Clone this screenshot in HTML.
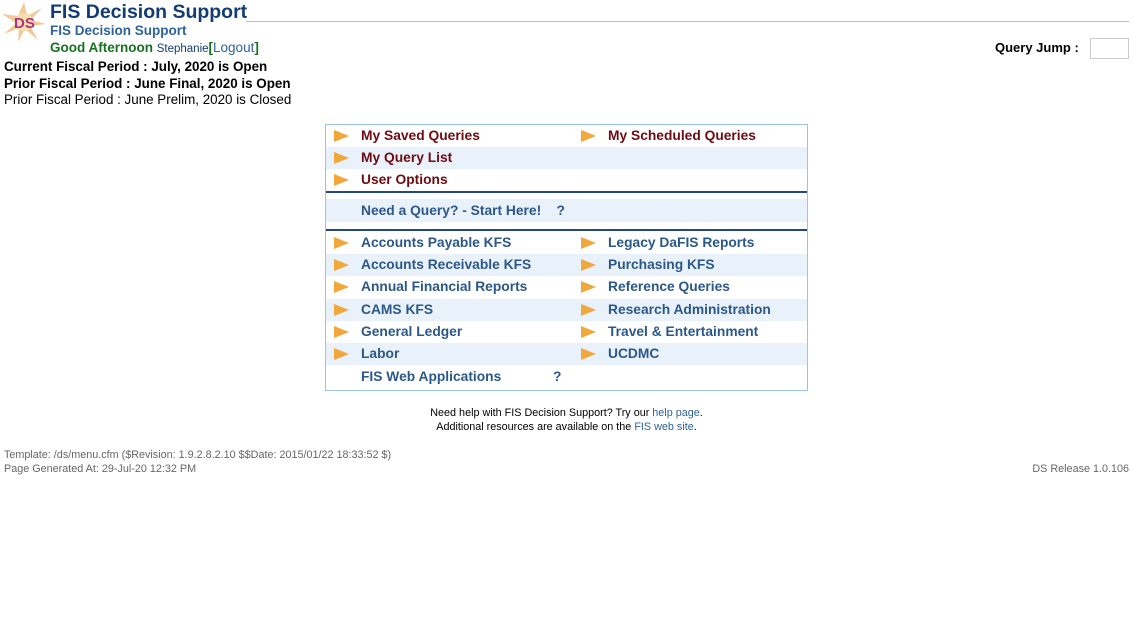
<!DOCTYPE html>
<html><head><meta charset="utf-8"><style>
body{margin:0;width:1133px;height:644px;background:#fff;font-family:"Liberation Sans",Arial,sans-serif;position:relative;overflow:hidden}
.a{position:absolute;white-space:nowrap}
.row{position:absolute;left:326px;width:481px;height:22px}
.b{background:#e9f1fa}
.t{position:absolute;font-weight:bold;font-size:13.8px;top:3px}
.r{color:#6e0b12}.bl{color:#2b5889}
.ar{position:absolute;top:5px;width:0;height:0;border-left:15px solid #f0a73c;border-top:6px solid transparent;border-bottom:6px solid transparent}
.sep{position:absolute;left:326px;width:481px;height:2px;background:#24497a}
</style></head><body>
<svg class="a" style="left:2px;top:2px" width="44" height="40" viewBox="0 0 44 40">
<polygon points="22,0 25,14 40,6 29,18 44,22 28,24 36,38 23,27 16,40 17,26 2,32 14,21 0,12 16,14" fill="#f3c89a"/>
<circle cx="22" cy="20" r="9" fill="#f7e0a8"/>
<text x="12" y="26" font-family="Liberation Sans" font-weight="bold" font-size="15" fill="#b0308a">DS</text></svg>
<div class="a" style="left:50px;top:1px;font-size:19.5px;font-weight:bold;color:#123c72">FIS Decision Support</div>
<div class="a" style="left:246px;top:21px;width:883px;height:1px;background:#a9c6e2"></div>
<div class="a" style="left:50px;top:23px;font-size:13.5px;font-weight:bold;color:#2f6299">FIS Decision Support</div>
<div class="a" style="left:50px;top:40px;font-size:13.5px;font-weight:bold;color:#167221">Good Afternoon <span style="font-size:11.5px;font-weight:normal;color:#123c72">Stephanie</span><span style="color:#167221">[</span><span style="font-weight:normal;color:#2f6299">Logout</span><span style="color:#167221">]</span></div>
<div class="a" style="left:995px;top:40px;font-size:13px;font-weight:bold">Query Jump :</div>
<div class="a" style="left:1090px;top:38px;width:37px;height:19px;border:1px solid #ccc"></div>
<div class="a" style="left:4px;top:59px;font-size:13.4px;font-weight:bold;line-height:16.5px">Current Fiscal Period : July, 2020 is Open<br>Prior Fiscal Period : June Final, 2020 is Open<br><span style="font-weight:normal">Prior Fiscal Period : June Prelim, 2020 is Closed</span></div>
<div class="a" style="left:325px;top:124px;width:481px;height:265px;border:1px solid #9cc3e3"></div>
<div class="row" style="top:125px"><i class="ar" style="left:8px"></i><span class="t r" style="left:35px">My Saved Queries</span><i class="ar" style="left:255px"></i><span class="t r" style="left:282px">My Scheduled Queries</span></div>
<div class="row b" style="top:147px"><i class="ar" style="left:8px"></i><span class="t r" style="left:35px">My Query List</span></div>
<div class="row" style="top:169px"><i class="ar" style="left:8px"></i><span class="t r" style="left:35px">User Options</span></div>
<div class="sep" style="top:191px"></div>
<div class="row b" style="top:199px;height:23px"><span class="t bl" style="left:35px;top:4px">Need a Query? - Start Here! &nbsp;&nbsp;&nbsp;?</span></div>
<div class="sep" style="top:229px"></div>
<div class="row" style="top:232px"><i class="ar" style="left:8px"></i><span class="t bl" style="left:35px">Accounts Payable KFS</span><i class="ar" style="left:255px"></i><span class="t bl" style="left:282px">Legacy DaFIS Reports</span></div>
<div class="row b" style="top:254px"><i class="ar" style="left:8px"></i><span class="t bl" style="left:35px">Accounts Receivable KFS</span><i class="ar" style="left:255px"></i><span class="t bl" style="left:282px">Purchasing KFS</span></div>
<div class="row" style="top:276px"><i class="ar" style="left:8px"></i><span class="t bl" style="left:35px">Annual Financial Reports</span><i class="ar" style="left:255px"></i><span class="t bl" style="left:282px">Reference Queries</span></div>
<div class="row b" style="top:299px"><i class="ar" style="left:8px"></i><span class="t bl" style="left:35px">CAMS KFS</span><i class="ar" style="left:255px"></i><span class="t bl" style="left:282px">Research Administration</span></div>
<div class="row" style="top:321px"><i class="ar" style="left:8px"></i><span class="t bl" style="left:35px">General Ledger</span><i class="ar" style="left:255px"></i><span class="t bl" style="left:282px">Travel &amp; Entertainment</span></div>
<div class="row b" style="top:343px"><i class="ar" style="left:8px"></i><span class="t bl" style="left:35px">Labor</span><i class="ar" style="left:255px"></i><span class="t bl" style="left:282px">UCDMC</span></div>
<div class="row" style="top:366px"><span class="t bl" style="left:35px">FIS Web Applications</span><span class="t bl" style="left:227px">?</span></div>
<div class="a" style="left:0;width:1133px;top:407px;text-align:center;font-size:10.8px;line-height:13.5px">Need help with FIS Decision Support? Try our <span style="color:#2f6299">help page</span>.<br>Additional resources are available on the <span style="color:#2f6299">FIS web site</span>.</div>
<div class="a" style="left:4px;top:449px;font-size:10.8px;color:#666;line-height:13.5px">Template: /ds/menu.cfm ($Revision: 1.9.2.8.2.10 $$Date: 2015/01/22 18:33:52 $)<br>Page Generated At: 29-Jul-20 12:32 PM</div>
<div class="a" style="right:4px;top:463px;font-size:10.8px;color:#666">DS Release 1.0.106</div>
</body></html>
